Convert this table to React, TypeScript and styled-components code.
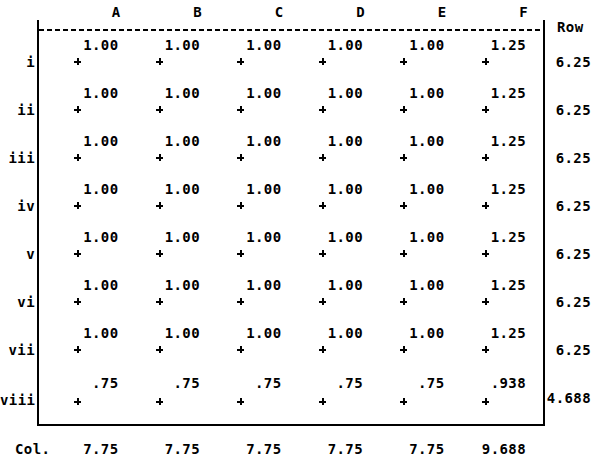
import React from 'react'
import styled, { createGlobalStyle } from 'styled-components'

const GlobalStyle = createGlobalStyle`
  html, body {
    margin: 0;
    padding: 0;
    background: #ffffff;
  }
  body {
    font-family: "DejaVu Sans Mono", "Liberation Mono", monospace;
    font-weight: 700;
    font-size: 14px;
    letter-spacing: 0.4px;
    color: #000000;
  }
`

const COL_WIDTH = '81.5px'

const Page = styled.div`
  width: 599px;
  height: 459px;
  overflow: hidden;
  background: #ffffff;
`
const HeaderRow = styled.div`
  display: grid;
  grid-template-columns: repeat(6, ${COL_WIDTH});
  height: 20px;
  padding-left: 39px;
`
const ColumnLetter = styled.div`
  padding-top: 5px;
  line-height: 14px;
  text-align: right;
`
const Body = styled.div`
  display: flex;
`
const LabelColumn = styled.div`
  width: 37px;
  padding-top: 11px;
`
const RowLabel = styled.div<{ $last?: boolean }>`
  height: ${({ $last }) => ($last ? '57px' : '48px')};
  box-sizing: border-box;
  padding-top: ${({ $last }) => ($last ? '26px' : '24px')};
  padding-right: 2px;
  line-height: 14px;
  text-align: right;
`
const Frame = styled.div`
  width: 504px;
  border-left: 2px solid #000;
  border-right: 2px solid #000;
  border-bottom: 2px solid #000;
`
const TopRule = styled.div`
  margin-top: 9px;
  height: 2px;
  background-image: repeating-linear-gradient(to right, #000 0 5px, transparent 5px 8px);
`
const GridRow = styled.div<{ $last?: boolean }>`
  display: grid;
  grid-template-columns: repeat(6, ${COL_WIDTH});
  height: ${({ $last }) => ($last ? '57px' : '48px')};
`
const Cell = styled.div<{ $last?: boolean }>`
  display: flex;
  flex-direction: column;
  padding-top: ${({ $last }) => ($last ? '9px' : '7px')};
`
const Value = styled.div`
  line-height: 14px;
  text-align: right;
  padding-right: 2px;
`
const Plus = styled.div<{ $last?: boolean }>`
  position: relative;
  width: 7px;
  height: 7px;
  margin-left: 35px;
  margin-top: ${({ $last }) => ($last ? '8px' : '6px')};

  &::before,
  &::after {
    content: '';
    position: absolute;
    background: #000;
  }
  &::before {
    left: 0;
    top: 3px;
    width: 7px;
    height: 2px;
  }
  &::after {
    left: 3px;
    top: 0;
    width: 2px;
    height: 7px;
  }
`
const TotalsColumn = styled.div`
  width: 54px;
`
const RowHead = styled.div`
  height: 11px;
  padding-left: 12px;
  line-height: 14px;
  white-space: nowrap;
`
const RowTotal = styled.div<{ $last?: boolean }>`
  height: ${({ $last }) => ($last ? '57px' : '48px')};
  box-sizing: border-box;
  padding-top: 24px;
  padding-right: 8px;
  line-height: 14px;
  text-align: right;
`
const Footer = styled.div`
  display: grid;
  grid-template-columns: 39px repeat(6, ${COL_WIDTH});
  padding-top: 16px;
`
const FooterLabel = styled.div`
  padding-left: 15px;
  line-height: 14px;
  white-space: nowrap;
`
const ColTotal = styled.div`
  line-height: 14px;
  text-align: right;
  padding-right: 2px;
`

const columns = ['A', 'B', 'C', 'D', 'E', 'F']

const fullRow = ['1.00', '1.00', '1.00', '1.00', '1.00', '1.25']

const rows = [
  { label: 'i', values: fullRow, total: '6.25' },
  { label: 'ii', values: fullRow, total: '6.25' },
  { label: 'iii', values: fullRow, total: '6.25' },
  { label: 'iv', values: fullRow, total: '6.25' },
  { label: 'v', values: fullRow, total: '6.25' },
  { label: 'vi', values: fullRow, total: '6.25' },
  { label: 'vii', values: fullRow, total: '6.25' },
  { label: 'viii', values: ['.75', '.75', '.75', '.75', '.75', '.938'], total: '4.688' },
]

const colTotals = ['7.75', '7.75', '7.75', '7.75', '7.75', '9.688']

export default function App() {
  const lastIndex = rows.length - 1
  return (
    <Page>
      <GlobalStyle />
      <HeaderRow>
        {columns.map((c) => (
          <ColumnLetter key={c}>{c}</ColumnLetter>
        ))}
      </HeaderRow>
      <Body>
        <LabelColumn>
          {rows.map((r, i) => (
            <RowLabel key={r.label} $last={i === lastIndex}>
              {r.label}
            </RowLabel>
          ))}
        </LabelColumn>
        <Frame>
          <TopRule />
          {rows.map((r, i) => (
            <GridRow key={r.label} $last={i === lastIndex}>
              {r.values.map((v, j) => (
                <Cell key={j} $last={i === lastIndex}>
                  <Value>{v}</Value>
                  <Plus $last={i === lastIndex} />
                </Cell>
              ))}
            </GridRow>
          ))}
        </Frame>
        <TotalsColumn>
          <RowHead>Row</RowHead>
          {rows.map((r, i) => (
            <RowTotal key={r.label} $last={i === lastIndex}>
              {r.total}
            </RowTotal>
          ))}
        </TotalsColumn>
      </Body>
      <Footer>
        <FooterLabel>Col.</FooterLabel>
        {colTotals.map((t, j) => (
          <ColTotal key={j}>{t}</ColTotal>
        ))}
      </Footer>
    </Page>
  )
}
